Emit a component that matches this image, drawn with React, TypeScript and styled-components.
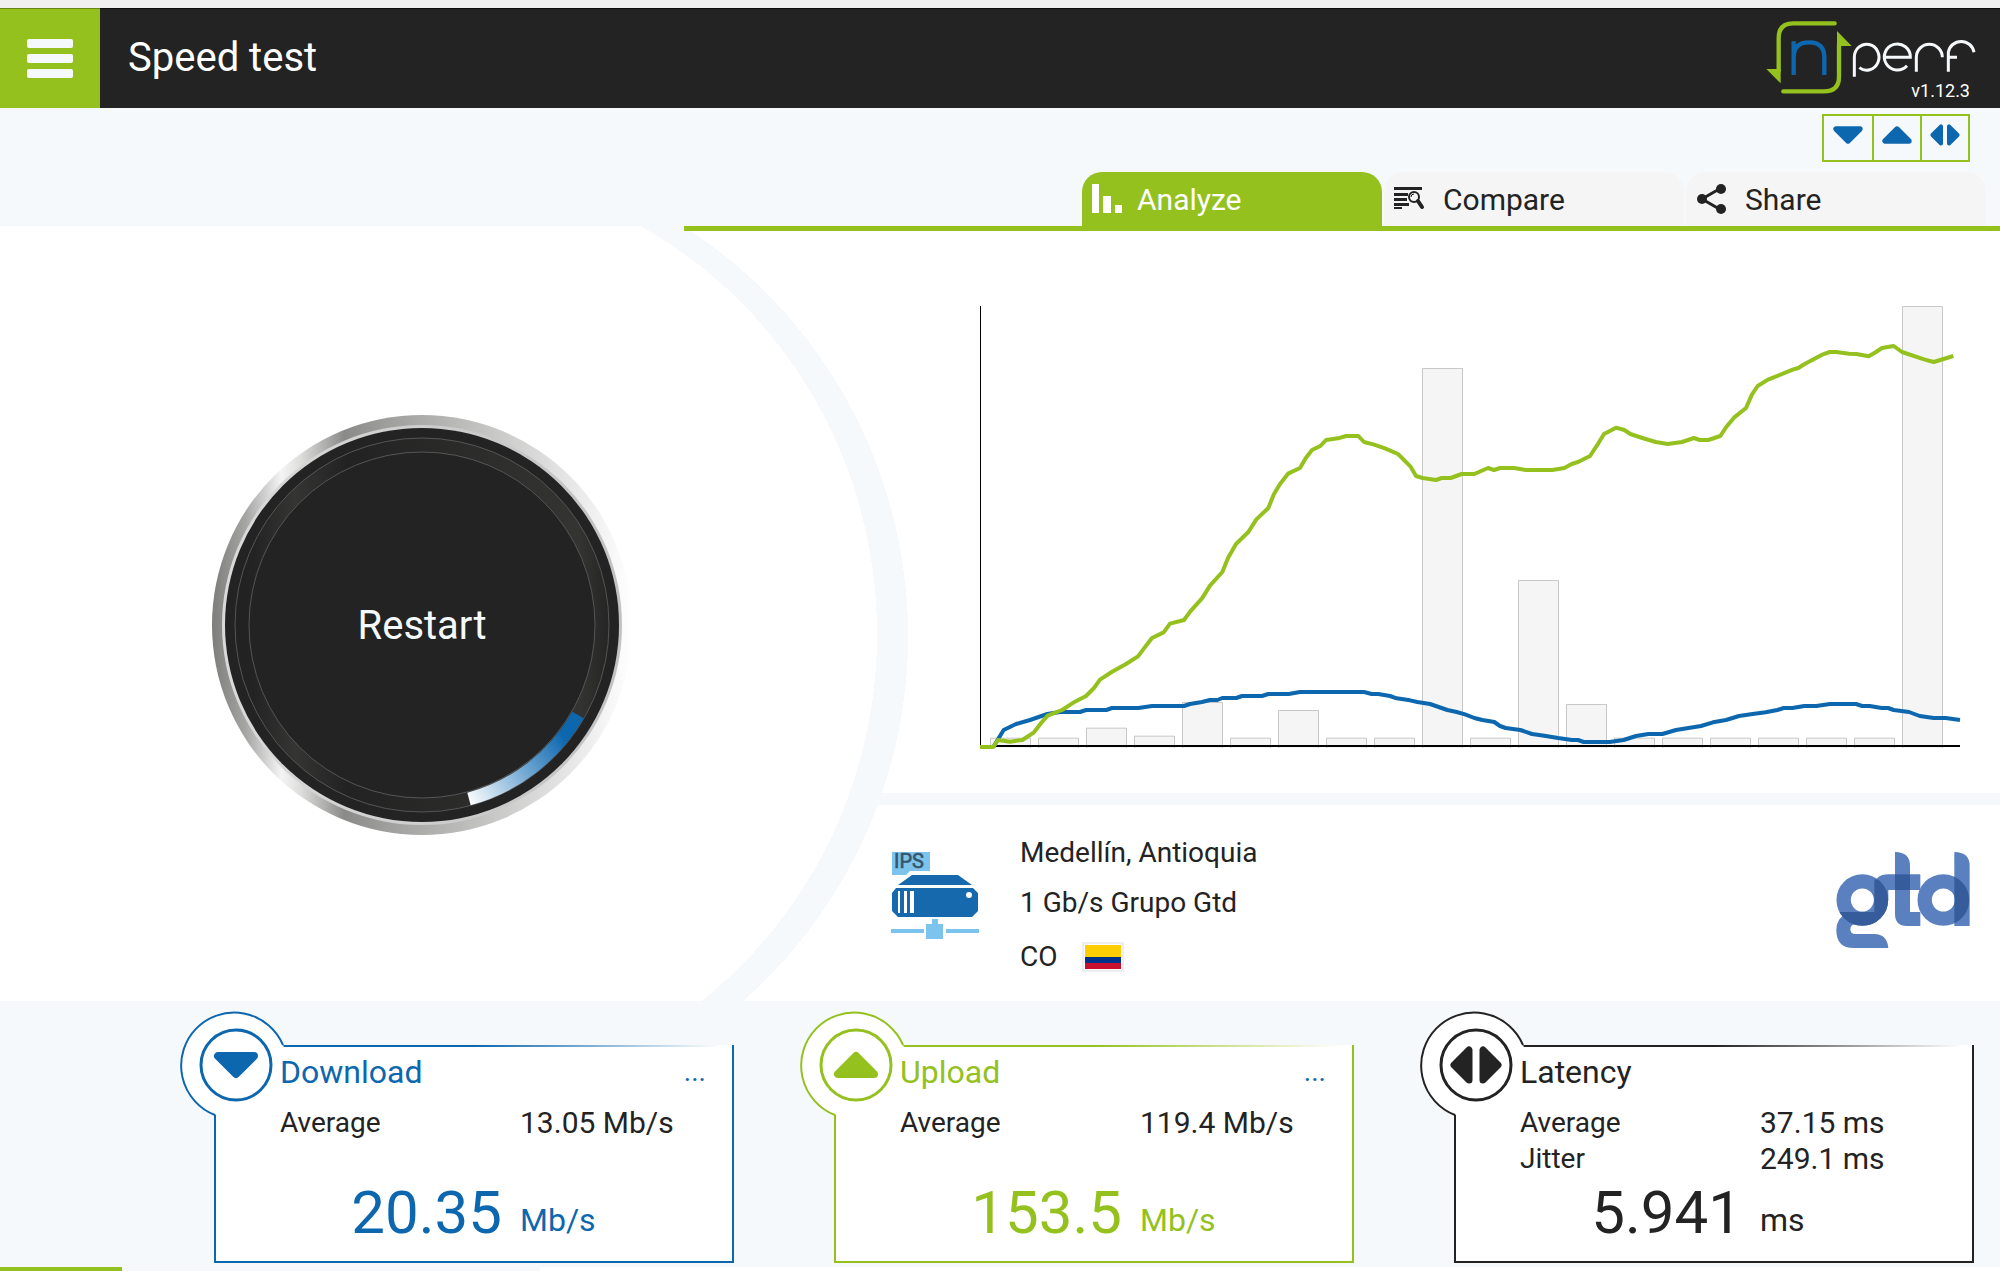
import React, { useState } from "react";
import styled, { createGlobalStyle } from "styled-components";

const c = {
  green: "#95c11f",
  blue: "#0d67ae",
  dark: "#232323",
  pale: "#f5f9fc",
  tab: "#f5f5f5",
};

const GlobalStyle = createGlobalStyle`
  *, *::before, *::after { box-sizing: border-box; }
  body {
    margin: 0;
    background: #fff;
    color: ${c.dark};
    font-family: Roboto, "Open Sans", sans-serif;
    font-size: 28px;
  }
  button { font: inherit; color: inherit; border: 0; padding: 0; background: none; cursor: pointer; }
  svg { display: block; overflow: visible; }
  h1, h2, p, dl, dt, dd { margin: 0; font-weight: 400; }
`;

const TopStrip = styled.div`
  height: 8px;
  background: #f0f0f0;
`;

const Header = styled.header`
  display: flex;
  align-items: stretch;
  height: 100px;
  background: ${c.dark};
  color: #fff;
  box-shadow: inset 0 1px 0 rgba(0, 0, 0, 0.6);
`;

const MenuButton = styled.button`
  display: flex;
  flex-direction: column;
  align-items: center;
  justify-content: center;
  gap: 6px;
  width: 100px;
  background: ${c.green};
  box-shadow: inset 0 1px 0 rgba(0, 0, 0, 0.3);
`;

const MenuBar = styled.span`
  width: 46px;
  height: 9px;
  border-radius: 2px;
  background: ${c.pale};
`;

const Title = styled.h1`
  flex: 1;
  padding-left: 28px;
  font-size: 40px;
  line-height: 100px;
`;

const Brand = styled.div`
  display: flex;
  flex-direction: column;
  align-items: flex-end;
  padding: 12px 24px 0 0;
`;

const Version = styled.span`
  margin: -15px 6px 0 0;
  font-size: 18px;
  line-height: 20px;
`;

const SubHeader = styled.div`
  display: flex;
  flex-direction: column;
  align-items: flex-end;
  gap: 10px;
  padding-top: 6px;
  background: ${c.pale};
`;

const Toolbar = styled.div`
  display: flex;
  margin-right: 30px;
  border: 2px solid ${c.green};
`;

const ToolButton = styled.button`
  display: flex;
  justify-content: center;
  align-items: center;
  width: 48px;
  height: 44px;
  padding-bottom: 6px;
  & + & {
    border-left: 2px solid ${c.green};
  }
`;

const Tabs = styled.div`
  display: flex;
  gap: 2px;
  margin-right: 14px;
`;

const Tab = styled.button<{ $active: boolean }>`
  display: flex;
  align-items: center;
  gap: 14px;
  width: 300px;
  height: 54px;
  padding-left: 9px;
  border-radius: 20px 20px 0 0;
  font-size: 30px;
  background: ${(p) => (p.$active ? c.green : c.tab)};
  color: ${(p) => (p.$active ? "#fff" : c.dark)};
`;

const Main = styled.main`
  background:
    linear-gradient(#fff, #fff) left / 422px 100% no-repeat,
    radial-gradient(455px 465px at 422px 408px, #fff 100%, transparent 100%),
    radial-gradient(486px 486px at 422px 410px, ${c.pale} 100%, transparent 100%),
    #fff;
`;

const TabLine = styled.div`
  height: 5px;
  margin-left: 684px;
  background: ${c.green};
`;

const Columns = styled.div`
  display: grid;
  grid-template-columns: 844px 1fr;
  column-gap: 24px;
`;

const DialPanel = styled.section`
  display: flex;
  align-items: center;
  justify-content: center;
  padding-top: 18px;
`;

const DialButton = styled.button`
  display: grid;
  place-items: center;
  border-radius: 50%;
  & > * {
    grid-area: 1 / 1;
  }
`;

const DialLabel = styled.span`
  color: ${c.pale};
  font-size: 40px;
`;

const ChartPanel = styled.section`
  padding: 74px 40px 46px 112px;
  svg {
    width: 100%;
    height: auto;
  }
`;

const ServerPanel = styled.section`
  display: flex;
  align-items: flex-start;
  gap: 41px;
  padding: 23px 30px 15px 23px;
  border-top: 12px solid ${c.pale};
  & > svg {
    margin-top: 24px;
  }
`;

const ServerText = styled.div`
  flex: 1;
`;

const ServerLine = styled.p`
  line-height: 50px;
`;

const CountryLine = styled.p`
  display: flex;
  align-items: center;
  gap: 24px;
  line-height: 58px;
`;

const Flag = styled.span`
  width: 42px;
  height: 30px;
  padding: 1px;
  border: 2px solid #eee;
  background: linear-gradient(#ffcd00 50%, #003087 50%, #003087 75%, #c8102e 75%) content-box;
`;

const Results = styled.section`
  display: grid;
  grid-template-columns: repeat(3, 1fr);
  column-gap: 100px;
  padding: 44px 26px 4px 214px;
  background: ${c.pale};
`;

const Card = styled.article<{ $color: string }>`
  position: relative;
  display: flex;
  flex-direction: column;
  min-height: 218px;
  padding: 2px 26px 12px 64px;
  border: solid ${(p) => p.$color};
  border-width: 0 2px 2px;
  background:
    linear-gradient(to right, ${(p) => p.$color} 50%, transparent 98%) top / 100% 2px no-repeat,
    #fff;
`;

const Badge = styled.svg`
  position: absolute;
  left: -37px;
  top: -35px;
`;

const CardHead = styled.div`
  position: relative;
  display: flex;
  justify-content: space-between;
  align-items: center;
  height: 50px;
  margin-bottom: 8px;
`;

const CardTitle = styled.h2<{ $color: string }>`
  font-size: 32px;
  line-height: 50px;
  color: ${(p) => p.$color};
`;

const More = styled.button`
  color: ${c.blue};
  line-height: 50px;
`;

const Details = styled.dl`
  min-height: 72px;
`;

const Detail = styled.div`
  display: grid;
  grid-template-columns: 240px 1fr;
  line-height: 36px;
  dd {
    font-size: 30px;
    white-space: nowrap;
  }
`;

const Reading = styled.p<{ $color: string }>`
  display: grid;
  grid-template-columns: 240px 1fr;
  align-items: end;
  color: ${(p) => p.$color};
`;

const ReadingValue = styled.span`
  padding-right: 18px;
  text-align: right;
  font-size: 60px;
  line-height: 72px;
`;

const ReadingUnit = styled.span`
  font-size: 32px;
  line-height: 58px;
`;

const Footer = styled.footer`
  display: flex;
  height: 4px;
`;

const FooterProgress = styled.div`
  width: 122px;
  background: ${c.green};
`;

const FooterTrack = styled.div`
  width: 418px;
  background: ${c.pale};
`;

type Kind = "down" | "up" | "both";

const Arrow = ({ kind, color }: { kind: Kind; color: string }) => (
  <g fill={color} stroke={color} strokeWidth="8" strokeLinejoin="round">
    {kind === "down" && <path d="M-18-9H18L0 9Z" />}
    {kind === "up" && <path d="M-18 9H18L0-9Z" />}
    {kind === "both" && (
      <>
        <path strokeWidth="7" d="M-22 0-7-15V15Z" />
        <path strokeWidth="7" d="M22 0 7-15V15Z" />
      </>
    )}
  </g>
);

const ToolIcon = ({ kind }: { kind: Kind }) => (
  <svg width="30" height="24" viewBox={kind === "both" ? "-26 -21 52 42" : "-22 -18 44 36"}>
    <Arrow kind={kind} color={c.blue} />
  </svg>
);

const AnalyzeIcon = () => (
  <svg width="32" height="32" viewBox="0 0 32 32" fill="#fff">
    <path d="M1 1h7v29H1zM12 13h8v17h-8zM24 22h7v8h-7z" />
  </svg>
);

const CompareIcon = () => (
  <svg width="36" height="32" viewBox="0 0 36 32" fill={c.dark}>
    <path d="M1 4h28v3H1zM1 10h14v3H1zM1 15h13v3H1zM1 20h15v3H1zM1 24h8v2H1z" />
    <circle cx="21" cy="14" r="5" fill="none" stroke={c.dark} strokeWidth="2" />
    <path d="M18 14q0-3 3-3" fill="none" stroke={c.dark} strokeWidth="1" />
    <path d="m25 18 4 6" stroke={c.dark} strokeWidth="4" strokeLinecap="round" />
  </svg>
);

const ShareIcon = () => (
  <svg width="36" height="32" viewBox="0 0 36 32" fill={c.dark}>
    <path d="M26 5 7 16l19 11" fill="none" stroke={c.dark} strokeWidth="3" />
    <circle cx="26" cy="6" r="5" />
    <circle cx="7" cy="16" r="5" />
    <circle cx="26" cy="26" r="5" />
  </svg>
);

const BrandLogo = () => (
  <svg width="210" height="76" viewBox="320 60 630 228" fill="none" strokeLinecap="round" role="img" aria-label="nPerf">
    <g stroke={c.green} strokeWidth="13">
      <path d="M526 70H402Q358 70 358 114V212" />
      <path d="M372 274H494Q539 274 539 230V134" />
    </g>
    <path fill={c.green} d="M321 207H364V250ZM533 93 577 138H533Z" />
    <g stroke={c.blue} strokeWidth="13" strokeLinecap="butt">
      <path d="M403 124V225M403 172Q403 127 449 127T495 172V225" />
    </g>
    <g stroke={c.pale} strokeWidth="9" strokeLinecap="butt">
      <path d="M585 230V172A37 39 0 1 1 600 203" />
      <path d="M675 172H753A39 39 0 1 0 743 197" />
      <path d="M771 215V172A39 39 0 0 1 849 172" />
      <path d="M867 215V157A39 39 0 0 1 944 157M867 172H893" />
    </g>
  </svg>
);

const Dial = () => (
  <svg width="422" height="422" viewBox="-211 -211 422 422">
    <defs>
      <linearGradient id="metal">
        <stop offset="0" stopColor="#7d7d7b" />
        <stop offset="0.08" stopColor="#a5a5a4" />
        <stop offset="0.165" stopColor="#f4f4f4" />
        <stop offset="0.21" stopColor="#dededd" />
        <stop offset="0.315" stopColor="#8a8a88" />
        <stop offset="0.42" stopColor="#9f9f9e" />
        <stop offset="0.65" stopColor="#c4c4c3" />
        <stop offset="0.85" stopColor="#e6e6e6" />
        <stop offset="1" stopColor="#ffffff" />
      </linearGradient>
      <linearGradient id="rim">
        <stop offset="0" stopColor="#dadada" />
        <stop offset="1" stopColor="#c2c2c2" />
      </linearGradient>
      <linearGradient id="track">
        <stop offset="0" stopColor="#222" />
        <stop offset="0.05" stopColor="#232323" />
        <stop offset="0.16" stopColor="#353534" />
        <stop offset="0.3" stopColor="#222" />
        <stop offset="0.92" stopColor="#343432" />
        <stop offset="1" stopColor="#252525" />
      </linearGradient>
      <linearGradient id="sweep" gradientUnits="userSpaceOnUse" x1="142" y1="112" x2="48" y2="180">
        <stop offset="0" stopColor={c.blue} />
        <stop offset="0.5" stopColor="#7fb0d8" />
        <stop offset="1" stopColor="#fff" />
      </linearGradient>
    </defs>
    <circle r="210" fill="url(#metal)" />
    <circle r="200" fill="url(#rim)" />
    <circle r="197" fill={c.dark} />
    <circle r="187" fill="url(#track)" stroke="#555" />
    <circle r="173" fill={c.dark} stroke="#555" />
    <path d="M156 90A180 180 0 0 1 47 174" fill="none" stroke="url(#sweep)" strokeWidth="13" />
  </svg>
);

const bars = [28, 28, 58, 34, 135, 28, 111, 28, 28, 1137, 28, 501, 129, 28, 28, 28, 28, 28, 28, 1323];

const uploadLine =
  "60,1401 100,1401 114,1380 150,1385 187,1380 222,1357 245,1327 263,1307 306,1290 345,1265 378,1248 402,1224 420,1199 455,1176 498,1152 534,1129 552,1105 576,1074 611,1057 630,1031 672,1020 691,994 726,955 750,917 787,876 804,834 828,792 865,756 889,718 925,684 942,642 960,612 984,581 1020,564 1037,535 1056,510 1081,498 1098,480 1134,475 1158,468 1195,468 1212,486 1240,493 1275,505 1314,522 1351,559 1368,588 1388,594 1428,600 1445,594 1472,594 1505,582 1543,582 1584,564 1602,570 1620,564 1662,564 1698,570 1777,570 1813,564 1835,552 1854,546 1890,528 1915,490 1932,462 1968,443 1993,450 2011,462 2047,474 2087,486 2123,492 2166,486 2202,474 2219,480 2245,480 2281,468 2298,442 2322,413 2358,384 2376,343 2393,318 2424,299 2498,269 2515,264 2534,252 2589,223 2609,216 2629,216 2667,221 2689,222 2726,229 2748,216 2766,204 2801,198 2826,216 2892,238 2921,246 2980,228";

const downloadLine =
  "100,1401 131,1350 168,1332 210,1320 262,1302 300,1296 360,1296 378,1290 439,1290 456,1284 535,1284 576,1278 672,1278 690,1272 726,1266 750,1260 772,1260 787,1254 829,1254 846,1248 906,1248 925,1242 986,1242 1020,1236 1212,1236 1235,1242 1255,1242 1290,1248 1310,1255 1350,1261 1372,1266 1410,1272 1462,1290 1490,1296 1515,1303 1543,1314 1567,1320 1603,1326 1620,1338 1637,1344 1681,1350 1716,1362 1753,1367 1794,1374 1836,1380 1854,1380 1871,1386 1949,1386 1991,1380 2028,1368 2065,1362 2107,1362 2148,1350 2223,1338 2259,1327 2298,1320 2337,1308 2378,1302 2417,1297 2452,1290 2471,1284 2497,1284 2533,1278 2569,1278 2610,1272 2688,1272 2706,1278 2729,1278 2765,1284 2784,1284 2801,1290 2847,1296 2879,1308 2921,1314 2957,1314 3000,1320";

const SpeedChart = () => (
  <svg viewBox="60 75 2940 1326" role="img" aria-label="Speed over time">
    <g fill={c.tab} stroke="#c8c8c8" strokeWidth="3">
      {bars.map((h, i) => (
        <path key={i} d={`M${91.5 + i * 144} 1404V${1402.5 - h}h120V1404`} />
      ))}
    </g>
    <path d="M61.5 78V1401" stroke="#000" strokeWidth="3" />
    <path d="M60 1398H3000" stroke="#000" strokeWidth="6" />
    <g fill="none" strokeWidth="12" strokeLinejoin="round">
      <polyline points={downloadLine} stroke={c.blue} />
      <polyline points={uploadLine} stroke={c.green} />
    </g>
  </svg>
);

const ServerIcon = () => (
  <svg width="88" height="88" viewBox="0 0 88 88">
    <path fill="#7cc4ee" d="M1 0h38v19H19l-4 4H1z" />
    <text x="3" y="16" fontSize="20" fill="#36556b" stroke="#36556b" strokeWidth="0.6">
      IPS
    </text>
    <path fill="#1769ae" d="M7 33 21 23H67L81 33ZM5 36H82L87 41V59L81 65H7L1 59V41Z" />
    <path fill="#fff" d="M7 39h2v22H7zM13 39h3v22h-3zM19 39h4v22h-4z" />
    <circle cx="78" cy="43" r="3" fill="#fff" />
    <path fill="#7cc4ee" d="M41 67h6v5h5v15H35V72h6zM0 77h33v4H0zM55 77h33v4H55z" />
  </svg>
);

const ProviderLogo = () => (
  <svg width="134" height="96" viewBox="228 108 400 288" role="img" aria-label="gtd">
    <defs>
      <clipPath id="gOverlap">
        <path d="M228 288H342V190H400V340H228Z" />
      </clipPath>
      <clipPath id="dOverlap">
        <path d="M582 108H628V330H582Z" />
      </clipPath>
    </defs>
    <g fill="none" stroke="#5b80c0" strokeWidth="43">
      <circle cx="306" cy="252" r="56" />
      <circle cx="549" cy="252" r="56" />
    </g>
    <g fill="#5b80c0">
      <path d="M342 252V215Q342 175 385 175H480V222H384V252Z" />
      <path d="M404 108Q449 108 449 150V288H480V330H440Q404 330 404 294Z" />
      <path d="M582 108Q628 108 628 150V330H582Z" />
      <path d="M262 290Q228 306 228 342Q228 396 280 396H384Q380 354 342 354H285Q270 354 270 340Q270 324 290 324Z" />
    </g>
    <g fill="none" stroke="#375c9b" strokeWidth="43">
      <circle cx="306" cy="252" r="56" clipPath="url(#gOverlap)" />
      <circle cx="549" cy="252" r="56" clipPath="url(#dOverlap)" />
    </g>
    <path fill="#375c9b" d="M404 175H449V222H404Z" />
  </svg>
);

interface Result {
  title: string;
  kind: Kind;
  color: string;
  details: [string, string][];
  value: string;
  unit: string;
  more: boolean;
}

const results: Result[] = [
  { title: "Download", kind: "down", color: c.blue, details: [["Average", "13.05 Mb/s"]], value: "20.35", unit: "Mb/s", more: true },
  { title: "Upload", kind: "up", color: c.green, details: [["Average", "119.4 Mb/s"]], value: "153.5", unit: "Mb/s", more: true },
  {
    title: "Latency",
    kind: "both",
    color: c.dark,
    details: [
      ["Average", "37.15 ms"],
      ["Jitter", "249.1 ms"],
    ],
    value: "5.941",
    unit: "ms",
    more: false,
  },
];

const ResultCard = ({ title, kind, color, details, value, unit, more }: Result) => (
  <Card $color={color}>
    <Badge width="110" height="110" viewBox="-55 -55 110 110">
      <circle r="53" fill="#fff" />
      <path d="M49-20A53 53 0 1 0-19 50" fill="none" stroke={color} strokeWidth="2" />
      <circle cx="2" r="35" fill="none" stroke={color} strokeWidth="3" />
      <g transform="translate(2 0)">
        <Arrow kind={kind} color={color} />
      </g>
    </Badge>
    <CardHead>
      <CardTitle $color={color}>{title}</CardTitle>
      {more && <More aria-label={`${title} details`}>...</More>}
    </CardHead>
    <Details>
      {details.map(([name, text]) => (
        <Detail key={name}>
          <dt>{name}</dt>
          <dd>{text}</dd>
        </Detail>
      ))}
    </Details>
    <Reading $color={color}>
      <ReadingValue>{value}</ReadingValue>
      <ReadingUnit>{unit}</ReadingUnit>
    </Reading>
  </Card>
);

const tabs = [
  { name: "Analyze", Icon: AnalyzeIcon },
  { name: "Compare", Icon: CompareIcon },
  { name: "Share", Icon: ShareIcon },
];

const tools: [Kind, string][] = [
  ["down", "Download"],
  ["up", "Upload"],
  ["both", "Latency"],
];

export default function App() {
  const [active, setActive] = useState("Analyze");

  return (
    <>
      <GlobalStyle />
      <TopStrip />
      <Header>
        <MenuButton aria-label="Menu">
          <MenuBar />
          <MenuBar />
          <MenuBar />
        </MenuButton>
        <Title>Speed test</Title>
        <Brand>
          <BrandLogo />
          <Version>v1.12.3</Version>
        </Brand>
      </Header>
      <SubHeader>
        <Toolbar>
          {tools.map(([kind, label]) => (
            <ToolButton key={kind} aria-label={label}>
              <ToolIcon kind={kind} />
            </ToolButton>
          ))}
        </Toolbar>
        <Tabs role="tablist">
          {tabs.map(({ name, Icon }) => (
            <Tab key={name} role="tab" aria-selected={active === name} $active={active === name} onClick={() => setActive(name)}>
              <Icon />
              {name}
            </Tab>
          ))}
        </Tabs>
      </SubHeader>
      <Main>
        <TabLine />
        <Columns>
          <DialPanel>
            <DialButton>
              <Dial />
              <DialLabel>Restart</DialLabel>
            </DialButton>
          </DialPanel>
          <div>
            <ChartPanel>
              <SpeedChart />
            </ChartPanel>
            <ServerPanel>
              <ServerIcon />
              <ServerText>
                <ServerLine>Medellín, Antioquia</ServerLine>
                <ServerLine>1 Gb/s Grupo Gtd</ServerLine>
                <CountryLine>
                  CO
                  <Flag role="img" aria-label="Colombia" />
                </CountryLine>
              </ServerText>
              <ProviderLogo />
            </ServerPanel>
          </div>
        </Columns>
      </Main>
      <Results>
        {results.map((r) => (
          <ResultCard key={r.title} {...r} />
        ))}
      </Results>
      <Footer>
        <FooterProgress />
        <FooterTrack />
      </Footer>
    </>
  );
}
